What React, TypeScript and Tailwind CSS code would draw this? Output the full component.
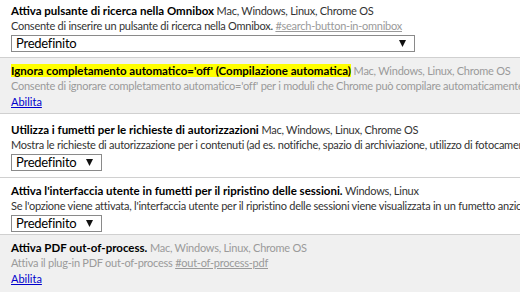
import React from "react";

type Flag = {
  title: string;
  highlight?: boolean;
  platforms: string;
  desc: string;
  anchor?: string;
  disabled?: boolean;
  select?: "wide" | "narrow";
  pad: string;
};

const flags: Flag[] = [
  {
    title: "Attiva pulsante di ricerca nella Omnibox",
    platforms: "Mac, Windows, Linux, Chrome OS",
    desc: "Consente di inserire un pulsante di ricerca nella Omnibox.",
    anchor: "#search-button-in-omnibox",
    select: "wide",
    pad: "pt-[3px] pb-[5px]",
  },
  {
    title: "Ignora completamento automatico='off' (Compilazione automatica)",
    highlight: true,
    platforms: "Mac, Windows, Linux, Chrome OS",
    desc: "Consente di ignorare completamento automatico='off' per i moduli che Chrome può compilare automaticamente.",
    disabled: true,
    pad: "pt-[5px] pb-[4px]",
  },
  {
    title: "Utilizza i fumetti per le richieste di autorizzazioni",
    platforms: "Mac, Windows, Linux, Chrome OS",
    desc: "Mostra le richieste di autorizzazione per i contenuti (ad es. notifiche, spazio di archiviazione, utilizzo di fotocamera/microfono) in fumetti.",
    select: "narrow",
    pad: "pt-[8px] pb-[6px]",
  },
  {
    title: "Attiva l'interfaccia utente in fumetti per il ripristino delle sessioni.",
    platforms: "Windows, Linux",
    desc: "Se l'opzione viene attivata, l'interfaccia utente per il ripristino delle sessioni viene visualizzata in un fumetto anziché in una barra informazioni.",
    select: "narrow",
    pad: "pt-[5px] pb-[2px]",
  },
  {
    title: "Attiva PDF out-of-process.",
    platforms: "Mac, Windows, Linux, Chrome OS",
    desc: "Attiva il plug-in PDF out-of-process",
    anchor: "#out-of-process-pdf",
    disabled: true,
    pad: "pt-[5px] pb-[8px]",
  },
];

function Select({ wide }: { wide: boolean }) {
  return (
    <div
      className={`flex shrink-0 items-center justify-between h-[17px] border border-[#8a8a8a] bg-white pl-[4px] pr-[8px] text-[13px] leading-none text-black ${
        wide ? "w-[404px]" : "w-[91px]"
      }`}
    >
      <span>Predefinito</span>
      <svg width="7" height="7" viewBox="0 0 7 7" className="shrink-0">
        <path d="M0 0h7L3.5 7z" fill="#111" />
      </svg>
    </div>
  );
}

export default function App() {
  return (
    <div
      className="w-[520px] h-[292px] overflow-hidden bg-white text-[11px] leading-[15px] tracking-[-0.25px] whitespace-nowrap"
      style={{ fontFamily: "Lato, 'Open Sans', sans-serif" }}
    >
      {flags.map((f, i) => (
        <div
          key={i}
          className={`pl-[11px] ${f.pad} ${i > 0 ? "border-t border-[#d0d0d0]" : ""} ${
            f.disabled ? "bg-[#f0f0f0]" : "bg-white"
          }`}
        >
          <div>
            <span
              className={`font-bold text-[11.5px] tracking-normal text-black ${
                f.highlight ? "bg-[#ffff00]" : ""
              }`}
            >
              {f.title}
            </span>{" "}
            <span className={f.disabled ? "text-[#9a9a9a]" : "text-[#333]"}>
              {f.platforms}
            </span>
          </div>
          <div className={f.disabled ? "text-[#9a9a9a]" : "text-[#333]"}>
            {f.desc}
            {f.anchor && (
              <>
                {" "}
                <span className="underline text-[#9a9a9a]">{f.anchor}</span>
              </>
            )}
          </div>
          {f.select ? (
            <div className="pt-[2px]">
              <Select wide={f.select === "wide"} />
            </div>
          ) : (
            <div className="pt-[1px]">
              <span className="underline text-[#0000cc] tracking-normal">Abilita</span>
            </div>
          )}
        </div>
      ))}
    </div>
  );
}
